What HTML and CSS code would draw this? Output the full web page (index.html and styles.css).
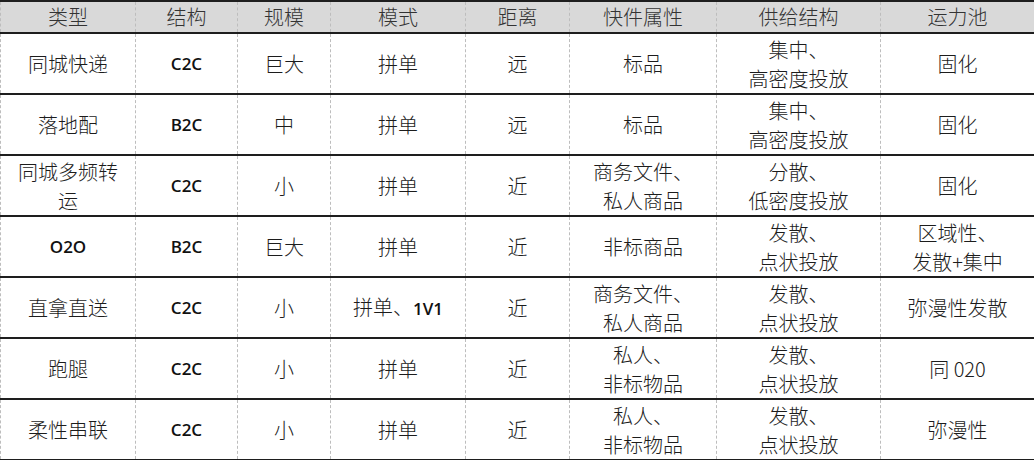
FILE: index.html
```html
<!DOCTYPE html>
<html lang="zh-CN">
<head>
<meta charset="utf-8">
<title>运力类型</title>
<link rel="stylesheet" href="styles.css">
</head>
<body>
<div class="sheet">
  <div class="row head">
    <div class="cell"><span class="ln">类型</span></div>
    <div class="cell"><span class="ln">结构</span></div>
    <div class="cell"><span class="ln">规模</span></div>
    <div class="cell"><span class="ln">模式</span></div>
    <div class="cell"><span class="ln">距离</span></div>
    <div class="cell"><span class="ln">快件属性</span></div>
    <div class="cell"><span class="ln">供给结构</span></div>
    <div class="cell"><span class="ln">运力池</span></div>
  </div>
  <div class="row">
    <div class="cell"><span class="ln">同城快递</span></div>
    <div class="cell"><span class="ln lat">C2C</span></div>
    <div class="cell"><span class="ln">巨大</span></div>
    <div class="cell"><span class="ln">拼单</span></div>
    <div class="cell"><span class="ln">远</span></div>
    <div class="cell"><span class="ln">标品</span></div>
    <div class="cell"><span class="ln">集中、</span><span class="ln">高密度投放</span></div>
    <div class="cell"><span class="ln">固化</span></div>
  </div>
  <div class="row">
    <div class="cell"><span class="ln">落地配</span></div>
    <div class="cell"><span class="ln lat">B2C</span></div>
    <div class="cell"><span class="ln">中</span></div>
    <div class="cell"><span class="ln">拼单</span></div>
    <div class="cell"><span class="ln">远</span></div>
    <div class="cell"><span class="ln">标品</span></div>
    <div class="cell"><span class="ln">集中、</span><span class="ln">高密度投放</span></div>
    <div class="cell"><span class="ln">固化</span></div>
  </div>
  <div class="row">
    <div class="cell"><span class="ln">同城多频转</span><span class="ln">运</span></div>
    <div class="cell"><span class="ln lat">C2C</span></div>
    <div class="cell"><span class="ln">小</span></div>
    <div class="cell"><span class="ln">拼单</span></div>
    <div class="cell"><span class="ln">近</span></div>
    <div class="cell"><span class="ln">商务文件、</span><span class="ln">私人商品</span></div>
    <div class="cell"><span class="ln">分散、</span><span class="ln">低密度投放</span></div>
    <div class="cell"><span class="ln">固化</span></div>
  </div>
  <div class="row">
    <div class="cell"><span class="ln lat">O2O</span></div>
    <div class="cell"><span class="ln lat">B2C</span></div>
    <div class="cell"><span class="ln">巨大</span></div>
    <div class="cell"><span class="ln">拼单</span></div>
    <div class="cell"><span class="ln">近</span></div>
    <div class="cell"><span class="ln">非标商品</span></div>
    <div class="cell"><span class="ln">发散、</span><span class="ln">点状投放</span></div>
    <div class="cell"><span class="ln">区域性、</span><span class="ln">发散+集中</span></div>
  </div>
  <div class="row">
    <div class="cell"><span class="ln">直拿直送</span></div>
    <div class="cell"><span class="ln lat">C2C</span></div>
    <div class="cell"><span class="ln">小</span></div>
    <div class="cell"><span class="ln">拼单、<span class="lat">1V1</span></span></div>
    <div class="cell"><span class="ln">近</span></div>
    <div class="cell"><span class="ln">商务文件、</span><span class="ln">私人商品</span></div>
    <div class="cell"><span class="ln">发散、</span><span class="ln">点状投放</span></div>
    <div class="cell"><span class="ln">弥漫性发散</span></div>
  </div>
  <div class="row">
    <div class="cell"><span class="ln">跑腿</span></div>
    <div class="cell"><span class="ln lat">C2C</span></div>
    <div class="cell"><span class="ln">小</span></div>
    <div class="cell"><span class="ln">拼单</span></div>
    <div class="cell"><span class="ln">近</span></div>
    <div class="cell"><span class="ln">私人、</span><span class="ln">非标物品</span></div>
    <div class="cell"><span class="ln">发散、</span><span class="ln">点状投放</span></div>
    <div class="cell"><span class="ln">同 020</span></div>
  </div>
  <div class="row">
    <div class="cell"><span class="ln">柔性串联</span></div>
    <div class="cell"><span class="ln lat">C2C</span></div>
    <div class="cell"><span class="ln">小</span></div>
    <div class="cell"><span class="ln">拼单</span></div>
    <div class="cell"><span class="ln">近</span></div>
    <div class="cell"><span class="ln">私人、</span><span class="ln">非标物品</span></div>
    <div class="cell"><span class="ln">发散、</span><span class="ln">点状投放</span></div>
    <div class="cell"><span class="ln">弥漫性</span></div>
  </div>
</div>
</body>
</html>
```
FILE: styles.css
```css
html, body {
  margin: 0;
  padding: 0;
  background: #ffffff;
}

.sheet {
  width: 1034px;
  border-top: 2px solid #1e1e1e;
  font-family: "Noto Sans CJK SC", "Noto Sans", sans-serif;
  font-weight: 300;
  font-size: 20px;
  color: #1c1c1c;
}

.row {
  display: grid;
  grid-template-columns: 135px 102px 93px 135px 104px 147px 164px 154px;
  height: 61px;
  box-sizing: border-box;
  border-bottom: 2px solid #1e1e1e;
}

.row.head {
  height: 32px;
  background: #d9d9d9;
  color: #333333;
}

.cell {
  display: flex;
  flex-direction: column;
  align-items: center;
  justify-content: center;
  text-align: center;
  border-left: 1px dashed #bdbdbd;
  white-space: nowrap;
}

.ln {
  display: block;
  line-height: 29px;
}

.row.head .ln {
  line-height: 28px;
}

.lat {
  font-family: "Open Sans", "Noto Sans", sans-serif;
  font-weight: 600;
  font-size: 17px;
  color: #111111;
}
```
